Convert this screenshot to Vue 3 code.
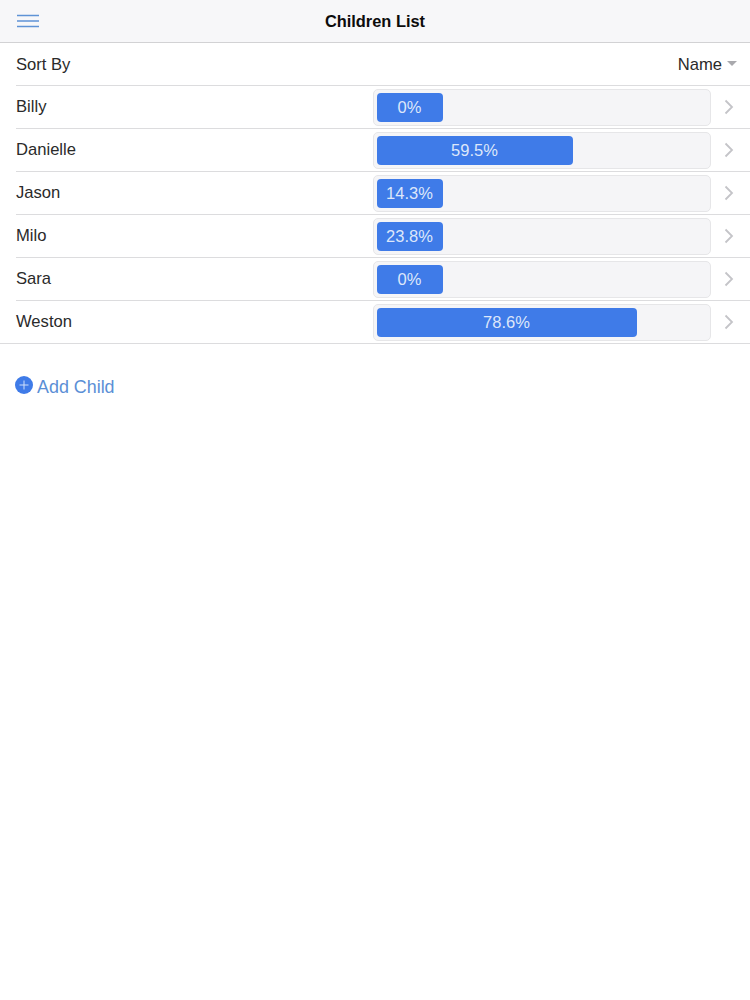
<script setup>
const children = [
  { name: "Billy", percent: "0%", fill: 66 },
  { name: "Danielle", percent: "59.5%", fill: 196 },
  { name: "Jason", percent: "14.3%", fill: 66 },
  { name: "Milo", percent: "23.8%", fill: 66 },
  { name: "Sara", percent: "0%", fill: 66 },
  { name: "Weston", percent: "78.6%", fill: 260 },
];
</script>

<template>
  <main class="page">
    <header class="nav-bar">
      <button class="menu-button" aria-label="Menu">
        <svg width="22" height="14" viewBox="0 0 22 14">
          <path d="M0 1.5H22M0 7H22M0 12.5H22" stroke="#5f93d6" stroke-width="1.5" fill="none" />
        </svg>
      </button>
      <h1>Children List</h1>
    </header>

    <section class="list">
      <div class="row sort-row">
        <span>Sort By</span>
        <span class="sort-value">Name <i class="caret"></i></span>
      </div>

      <div v-for="child in children" :key="child.name" class="row child-row">
        <span class="name">{{ child.name }}</span>
        <div class="track">
          <div class="fill" :style="{ width: child.fill + 'px' }">{{ child.percent }}</div>
        </div>
        <svg class="chevron" width="10" height="16" viewBox="0 0 10 16">
          <path d="M1.5 1.5L8 8L1.5 14.5" stroke="#c4c4c8" stroke-width="1.8" fill="none" />
        </svg>
      </div>
    </section>

    <a class="add-child">
      <svg class="add-icon" width="18" height="18" viewBox="0 0 18 18">
        <circle cx="9" cy="9" r="9" fill="#3f7be8" />
        <path d="M9 4.5V13.5M4.5 9H13.5" stroke="#cfe0fa" stroke-width="1" />
      </svg>
      <span>Add Child</span>
    </a>
  </main>
</template>

<style>
html,
body {
  margin: 0;
  background: #ffffff;
}
</style>

<style scoped>
.page {
  min-height: 1000px;
  background: #ffffff;
  color: #2a2a2a;
  font-family: "Liberation Sans", Arial, sans-serif;
  font-size: 16.6px;
}

.nav-bar {
  position: relative;
  display: flex;
  justify-content: center;
  align-items: center;
  height: 41px;
  padding-top: 1px;
  background: #f7f7f9;
  border-bottom: 1px solid #d2d2d4;
}

.nav-bar h1 {
  margin: 0;
  color: #0c0c0c;
  font-size: 16.4px;
  font-weight: bold;
}

.menu-button {
  position: absolute;
  left: 17px;
  top: 14px;
  display: flex;
  padding: 0;
  border: 0;
  background: none;
}

.list {
  border-bottom: 1px solid #dcdcde;
}

.row {
  display: flex;
  align-items: center;
  height: 42px;
  margin-left: 16px;
  border-bottom: 1px solid #dcdcde;
}

.row:last-child {
  border-bottom: 0;
}

.sort-row {
  justify-content: space-between;
  height: 41px;
  padding-top: 1px;
  padding-right: 13px;
}

.sort-value {
  display: flex;
  align-items: center;
  gap: 5px;
}

.caret {
  width: 0;
  height: 0;
  margin-bottom: 2px;
  border-left: 5px solid transparent;
  border-right: 5px solid transparent;
  border-top: 5px solid #a9a9ad;
}

.name {
  width: 357px;
}

.track {
  box-sizing: border-box;
  width: 338px;
  height: 37px;
  padding: 3px;
  border: 1px solid #e6e6e8;
  border-radius: 5px;
  background: #f5f5f7;
}

.fill {
  height: 29px;
  border-radius: 4px;
  background: #3f7be8;
  color: #dde7fa;
  font-size: 16.5px;
  line-height: 28px;
  text-align: center;
  text-indent: -1px;
}

.chevron {
  margin-left: 13px;
}

.add-child {
  display: flex;
  align-items: flex-start;
  gap: 4px;
  margin: 32px 0 0 15px;
  color: #5b8fd6;
  font-size: 17.9px;
}

.add-icon {
  flex: none;
}

.add-child span {
  padding-top: 1px;
}
</style>
